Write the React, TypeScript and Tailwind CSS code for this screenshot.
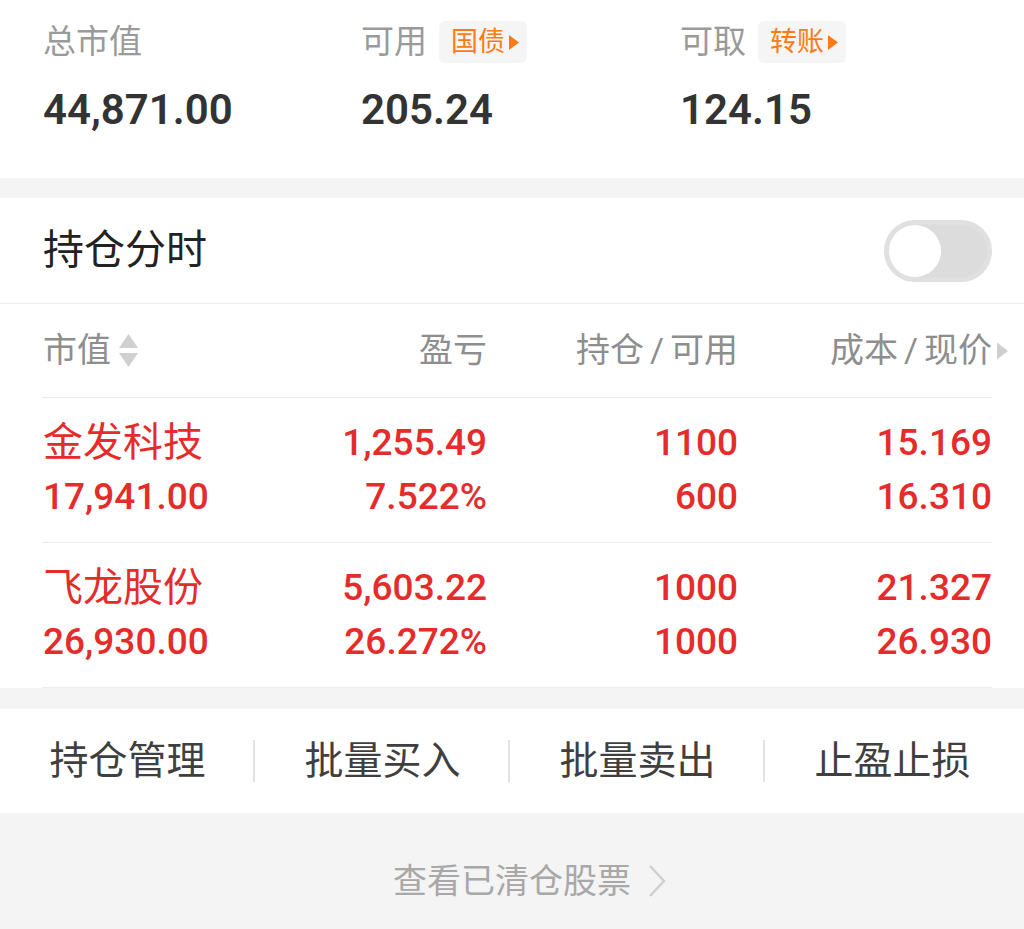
import React from "react";

const FONT = { fontFamily: 'Roboto, "Noto Sans CJK SC", sans-serif' };

const summary = [
  { label: "总市值", value: "44,871.00" },
  { label: "可用", value: "205.24", badge: "国债" },
  { label: "可取", value: "124.15", badge: "转账" },
];

const holdings = [
  { name: "金发科技", mv: "17,941.00", pl: "1,255.49", plPct: "7.522%", pos: "1100", avail: "600", cost: "15.169", price: "16.310" },
  { name: "飞龙股份", mv: "26,930.00", pl: "5,603.22", plPct: "26.272%", pos: "1000", avail: "1000", cost: "21.327", price: "26.930" },
];

const actions = ["持仓管理", "批量买入", "批量卖出", "止盈止损"];

function Badge({ text }: { text: string }) {
  return (
    <span className="ml-3 inline-flex h-[42px] items-center gap-1 rounded-md bg-[#f5f5f5] pl-3 pr-2 text-[27px] text-[#ff7a14]">
      {text}
      <svg width="10" height="15" viewBox="0 0 10 15" aria-hidden>
        <path d="M0 0 L10 7.5 L0 15 Z" fill="#ff7a14" />
      </svg>
    </span>
  );
}

function SortIcon() {
  return (
    <svg width="19" height="34" viewBox="0 0 19 34" className="ml-2" aria-hidden>
      <path d="M9.5 0 L19 14 L0 14 Z" fill="#d0d0d0" />
      <path d="M0 19 L19 19 L9.5 33 Z" fill="#d0d0d0" />
    </svg>
  );
}

export default function App() {
  return (
    <div className="min-h-[929px] w-[1024px] bg-[#f4f4f4]" style={FONT}>
      {/* 资产概览 */}
      <section className="bg-white pb-[44px] pl-[43px] pt-[21px]">
        <div className="grid grid-cols-[318px_319px_1fr]">
          {summary.map((s) => (
            <div key={s.label}>
              <div className="flex h-[42px] items-center text-[33px] text-[#9a9a9a]">
                {s.label}
                {s.badge && <Badge text={s.badge} />}
              </div>
              <div className="mt-[23px] flex h-[48px] items-center text-[42px] font-semibold leading-none text-[#333]">
                {s.value}
              </div>
            </div>
          ))}
        </div>
      </section>

      <section className="mt-[20px] bg-white">
        <div className="flex h-[106px] items-center justify-between border-b border-[#ececec] pl-[43px] pr-[32px]">
          <span className="text-[41px] text-[#222]">持仓分时</span>
          <div className="flex h-[62px] w-[108px] items-center rounded-full border-[5px] border-[#e0e0e0] bg-[#dcdcdc]">
            <div className="h-[52px] w-[52px] rounded-full bg-white" />
          </div>
        </div>

        <div className="px-[32px] pl-[42px]">
          <div className="grid h-[94px] grid-cols-[191px_254px_251px_254px] items-center border-b border-[#ececec] text-[34px] text-[#8e8e8e]">
            <div className="flex items-center pl-px">
              市值
              <SortIcon />
            </div>
            <div className="text-right">盈亏</div>
            <div className="text-right">
              持仓<span className="mx-1.5">/</span>可用
            </div>
            <div className="relative text-right">
              成本<span className="mx-1.5">/</span>现价
              <svg width="11" height="17" viewBox="0 0 11 17" className="absolute -right-[16px] top-1/2 -translate-y-1/2" aria-hidden>
                <path d="M0 0 L11 8.5 L0 17 Z" fill="#cfcfcf" />
              </svg>
            </div>
          </div>

          {holdings.map((h) => (
            <div
              key={h.name}
              className="grid grid-cols-[191px_254px_251px_254px] border-b border-[#ececec] py-[18px] text-[37px] font-medium text-[#e62b2b]"
            >
              <div className="pl-px">
                <div className="h-[54px] text-[40px] font-normal leading-[54px]">{h.name}</div>
                <div className="h-[54px] leading-[54px]">{h.mv}</div>
              </div>
              <div className="text-right">
                <div className="h-[54px] leading-[54px]">{h.pl}</div>
                <div className="h-[54px] leading-[54px]">{h.plPct}</div>
              </div>
              <div className="text-right">
                <div className="h-[54px] leading-[54px]">{h.pos}</div>
                <div className="h-[54px] leading-[54px]">{h.avail}</div>
              </div>
              <div className="text-right">
                <div className="h-[54px] leading-[54px]">{h.cost}</div>
                <div className="h-[54px] leading-[54px]">{h.price}</div>
              </div>
            </div>
          ))}
        </div>
      </section>

      {/* 操作栏 */}
      <nav className="mt-[21px] grid h-[104px] grid-cols-4 items-center bg-white pr-[4px]">
        {actions.map((a, i) => (
          <div key={a} className="relative flex items-center justify-center text-[39px] text-[#3f3f3f]">
            {a}
            {i < actions.length - 1 && (
              <span className="absolute right-0 top-1/2 h-[42px] w-[2px] -translate-y-1/2 bg-[#e2e2e2]" />
            )}
          </div>
        ))}
      </nav>

      <div className="flex h-[136px] items-center justify-center pl-[36px] text-[34px] text-[#a8a8a8]">
        查看已清仓股票
        <svg width="20" height="34" viewBox="0 0 20 34" className="ml-4" aria-hidden>
          <path d="M3 2 L17 17 L3 32" fill="none" stroke="#cfcfcf" strokeWidth="2.5" />
        </svg>
      </div>
    </div>
  );
}
